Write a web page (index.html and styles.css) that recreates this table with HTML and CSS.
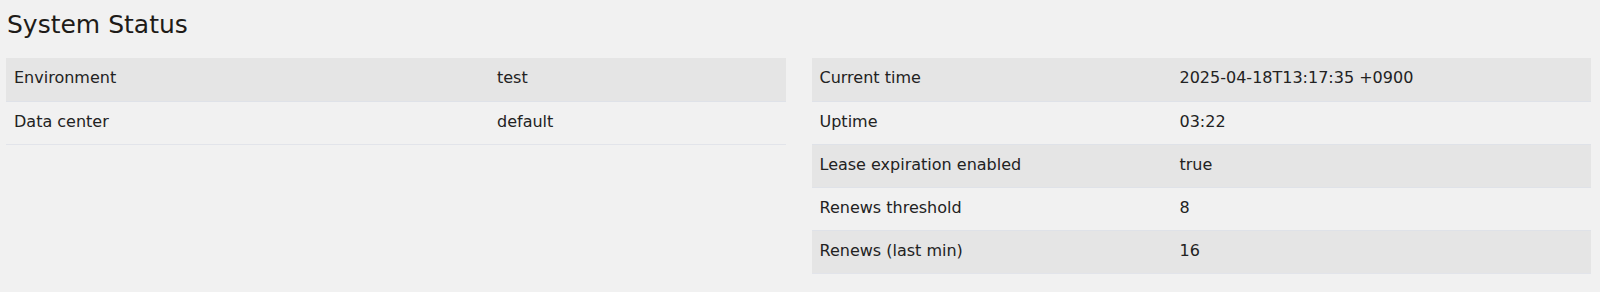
FILE: index.html
```html
<!DOCTYPE html>
<html>
<head>
<meta charset="utf-8">
<title>System Status</title>
<link rel="stylesheet" href="styles.css">
</head>
<body>
<div class="page">
  <h1 class="title">System Status</h1>
  <div class="row">
    <div class="col">
      <table class="status-table">
        <colgroup><col class="key-left"><col></colgroup>
        <tbody>
          <tr><td>Environment</td><td>test</td></tr>
          <tr><td>Data center</td><td>default</td></tr>
        </tbody>
      </table>
    </div>
    <div class="col">
      <table class="status-table">
        <colgroup><col class="key-right"><col></colgroup>
        <tbody>
          <tr><td>Current time</td><td>2025-04-18T13:17:35 +0900</td></tr>
          <tr><td>Uptime</td><td>03:22</td></tr>
          <tr><td>Lease expiration enabled</td><td>true</td></tr>
          <tr><td>Renews threshold</td><td>8</td></tr>
          <tr><td>Renews (last min)</td><td>16</td></tr>
        </tbody>
      </table>
    </div>
  </div>
</div>
</body>
</html>
```

FILE: styles.css
```css
html, body {
  margin: 0;
  padding: 0;
  background: #f1f1f1;
}
body {
  font-family: "DejaVu Sans", "Noto Sans", sans-serif;
  font-size: 16px;
  color: #222;
}
.page {
  padding: 0 9px 0 6px;
}
.title {
  margin: 0;
  padding: 8px 0 0 1px;
  height: 58px;
  box-sizing: border-box;
  font-family: "DejaVu Sans", "Noto Sans", sans-serif;
  font-weight: 400;
  font-size: 25px;
  line-height: 34px;
  color: #1e1b18;
}
.row {
  display: flex;
  gap: 26px;
  align-items: flex-start;
}
.col {
  flex: 1 1 0;
  min-width: 0;
}
.status-table {
  width: 100%;
  border-collapse: collapse;
  table-layout: fixed;
  border-bottom: 1px solid #e2e4ea;
}
.key-left { width: 483px; }
.key-right { width: 360px; }
.status-table td {
  padding: 9px 8px 11px;
  line-height: 22px;
  border-top: 1px solid #dfe2e8;
  vertical-align: top;
  white-space: nowrap;
}
.status-table tr:first-child td {
  border-top: 0;
  padding-top: 9px;
  padding-bottom: 12px;
}
.status-table tr:nth-child(odd) td {
  background: #e5e5e5;
}
```
